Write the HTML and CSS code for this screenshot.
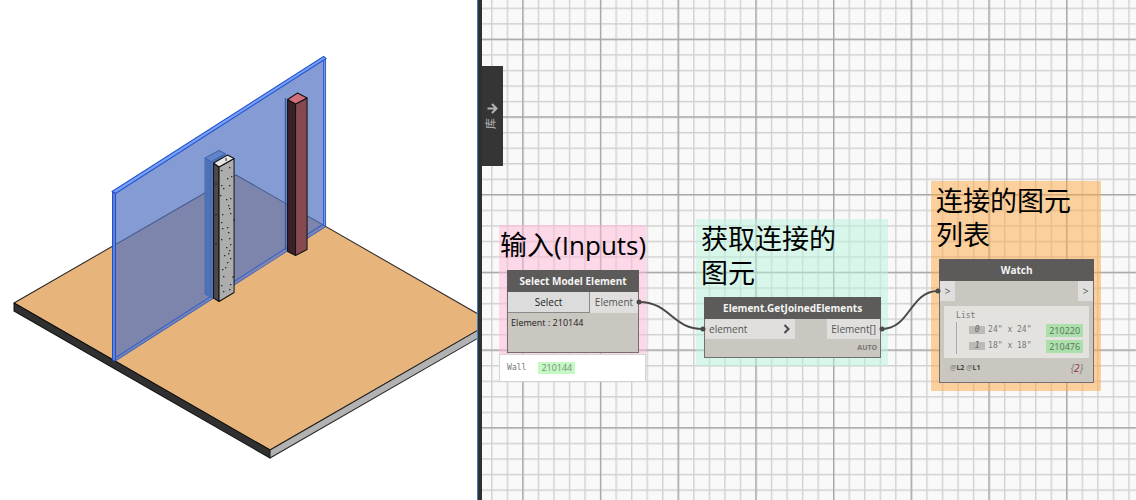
FILE: index.html
```html
<!DOCTYPE html>
<html lang="zh-CN">
<head>
<meta charset="utf-8">
<title>Element.GetJoinedElements</title>
<link rel="stylesheet" href="styles.css">
</head>
<body>
<main class="app">
  <section class="model" aria-label="模型视图">
    <svg class="scene" viewBox="0 0 477 500" preserveAspectRatio="xMidYMid slice" aria-hidden="true">
      <g stroke-linejoin="round">
        <path d="M14 303 236 175 492 322 270 450z" fill="#e7b47b" stroke="#222"/>
        <path d="M14 303 270 450v8L14 311z" fill="#303030" stroke="#111"/>
        <path d="M270 450 492 322v8L270 458z" fill="#b2b2b2" stroke="#222"/>
        <path d="M113 192 325 57V226L114 361z" fill="#5071c2" fill-opacity=".7"/>
        <path d="M112 191.500 323.500 56.500 326 58.500 115.500 193.500z" fill="#78a2fa" stroke="#2452cc"/>
        <path d="M112.500 192 115.500 193.500V360l-1.500 1-1.500-1.500z" fill="#5d84dc" stroke="#2450c2"/>
        <path d="M323.500 60V226M325.500 58.500V226" fill="none" stroke="#2d5bd0"/>
        <path d="M115 358 323.500 224M115 361 325.500 226.500" fill="none" stroke="#3561cb"/>
        <path d="M205 158 219 150.500 225.500 154 213 163V298l-8-4z" fill="#6384c8" stroke="#4168b2"/>
        <path d="M205 158 211 162V297.500L205 294z" fill="#4f72b4"/>
        <path d="m205 158 6 4 14-8M211 162v135" fill="none" stroke="#3e65b0"/>
        <path d="M285.500 98V250" stroke="#345ea9" stroke-width="1.500"/>
        <path d="M213.500 163 219 167V301.500l-5.500-3.500z" fill="#4b4949" stroke="#111"/>
        <path d="M219 167 234 158.500V292.500L219 301.500z" fill="#adadad" stroke="#111"/>
        <path fill="#222" d="M221 170h1.300v1.300h-1.300zM229 167h1.300v1.300h-1.300zM231 176h1.300v1.300h-1.300zM227 178h1.300v1.300h-1.300zM221 185h1.300v1.300h-1.300zM223 188h1.300v1.300h-1.300zM229 185h1.300v1.300h-1.300zM220 195h1.300v1.300h-1.300zM226 199h1.300v1.300h-1.300zM230 198h1.300v1.300h-1.300zM228 205h1.300v1.300h-1.300zM229 208h1.300v1.300h-1.300zM222 214h1.300v1.300h-1.300zM230 213h1.300v1.300h-1.300zM221 222h1.300v1.300h-1.300zM222 228h1.300v1.300h-1.300zM227 227h1.300v1.300h-1.300zM228 232h1.300v1.300h-1.300zM221 239h1.300v1.300h-1.300zM229 238h1.300v1.300h-1.300zM230 244h1.300v1.300h-1.300zM226 247h1.300v1.300h-1.300zM229 250h1.300v1.300h-1.300zM224 255h1.300v1.300h-1.300zM228 253h1.300v1.300h-1.300zM230 258h1.300v1.300h-1.300zM227 262h1.300v1.300h-1.300zM222 269h1.300v1.300h-1.300zM225 267h1.300v1.300h-1.300zM223 276h1.300v1.300h-1.300zM221 285h1.300v1.300h-1.300zM223 291h1.300v1.300h-1.300zM230 284h1.300v1.300h-1.300zM229 289h1.300v1.300h-1.300z"/>
        <path d="M213.500 163 227.500 155l6.500 3.500L219 167z" fill="#e6e6e6" stroke="#111"/>
        <path d="M226 158v3M215 184h2M215 215h2M215 244h2M233 220h2M232 277h2" stroke="#222"/>
        <path d="M287.500 99.500 295.500 104V255.500l-8-4z" fill="#3b2125" stroke="#111"/>
        <path d="M295.500 104 307 98V249.500l-11.500 6z" fill="#854950" stroke="#111"/>
        <path d="M287.500 99.500 297.500 93 307 98l-11.500 6z" fill="#d1707a" stroke="#111"/>
      </g>
    </svg>
  </section>

  <section class="canvas" aria-label="工作空间">
    <svg class="canvas-grid" aria-hidden="true">
      <defs>
        <pattern id="minor" width="15.540" height="15.540" patternUnits="userSpaceOnUse" x="40.200" y="38.700">
          <path d="M.7 0V15.540M0 .7H15.540" stroke="#d1d1d1" stroke-width="1.400"/>
        </pattern>
        <pattern id="major" width="77.700" height="77.700" patternUnits="userSpaceOnUse" x="40.200" y="38.700">
          <path d="M.7 0V77.700M0 .7H77.700" stroke="#a2a2a2" stroke-width="1.200"/>
        </pattern>
      </defs>
      <rect width="100%" height="100%" fill="url(#minor)"/>
      <rect width="100%" height="100%" fill="url(#major)"/>
    </svg>

    <button class="library" type="button">
      <svg width="11" height="11" viewBox="0 0 11 11" aria-hidden="true"><path d="M.5 5.500h8M5 1l4.500 4.500L5 10" fill="none" stroke="#b4b4b4" stroke-width="2"/></svg>
      <span class="library-label">库</span>
    </button>

    <article class="group group-inputs">
      <h2 class="group-title">输入<span class="latin">(Inputs)</span></h2>
      <div class="node">
        <h3 class="node-title">Select Model Element</h3>
        <div class="ports">
          <button class="select" type="button">Select</button>
          <span class="port port-element">Element</span>
        </div>
        <p class="selection">Element : 210144</p>
      </div>
    </article>
    <div class="preview"><span class="mono">Wall</span><span class="id">210144</span></div>

    <article class="group group-joined">
      <h2 class="group-title">获取连接的<br>图元</h2>
      <div class="node">
        <h3 class="node-title">Element.GetJoinedElements</h3>
        <div class="ports">
          <span class="port port-in">element
            <svg width="8" height="10" viewBox="0 0 8 10" aria-hidden="true"><path d="m1.500 1 4 4-4 4" fill="none" stroke="#484848" stroke-width="2"/></svg>
          </span>
          <span class="port">Element[]</span>
        </div>
        <p class="lacing">AUTO</p>
      </div>
    </article>

    <article class="group group-list">
      <h2 class="group-title">连接的图元<br>列表</h2>
      <div class="node">
        <h3 class="node-title">Watch</h3>
        <div class="ports">
          <span class="port port-mark">&gt;</span>
          <span class="port port-mark">&gt;</span>
        </div>
        <div class="watch">
          <div class="watch-body">
            <p class="mono">List</p>
            <ol class="items">
              <li class="item"><span class="index">0</span><span class="mono size">24" x 24"</span><span class="id">210220</span></li>
              <li class="item"><span class="index">1</span><span class="mono size">18" x 18"</span><span class="id">210476</span></li>
            </ol>
          </div>
          <div class="watch-foot">
            <span class="levels">@<b>L2</b> @<b>L1</b></span>
            <span class="count">{<b>2</b>}</span>
          </div>
        </div>
      </div>
    </article>

    <svg class="wires" aria-hidden="true">
      <g fill="none" stroke="#494949" stroke-width="2">
        <path d="M157 302C188 302 190 329 221 329"/>
        <path d="M400 329C428 329 428 291 456 291"/>
      </g>
      <g fill="#494949">
        <circle cx="157" cy="302" r="2.500"/><circle cx="221" cy="329" r="2.500"/>
        <circle cx="400" cy="329" r="2.500"/><circle cx="456" cy="291" r="2.500"/>
      </g>
    </svg>
  </section>
</main>
</body>
</html>
```
FILE: styles.css
```css
* {
  box-sizing: border-box;
}

body,
h2,
h3,
p,
ol {
  margin: 0;
  padding: 0;
}

body {
  font: 10px/14px "Open Sans", "Noto Sans CJK SC", sans-serif;
  color: #222;
  background: #fff;
}

button {
  border: 0;
  padding: 0;
  font: inherit;
  color: inherit;
}

.app {
  display: flex;
  min-height: 100vh;
}

.model {
  flex: 0 0 42%;
  display: flex;
}

.scene {
  width: 100%;
  height: 100vh;
}

.canvas {
  position: relative;
  flex: 1;
  overflow: hidden;
  background: #f9f9f9;
  border-left: 4px solid #303030;
  box-shadow: -1px 0 #3583c4;
  margin-left: 1px;
}

.canvas-grid,
.wires {
  position: absolute;
  inset: 0;
  width: 100%;
  height: 100%;
}

.wires {
  pointer-events: none;
}

.library {
  position: absolute;
  left: 0;
  top: 66px;
  width: 21px;
  height: 100px;
  display: flex;
  flex-direction: column;
  align-items: center;
  justify-content: center;
  gap: 4px;
  background: #353535;
  color: #b4b4b4;
}

.library-label {
  writing-mode: vertical-rl;
  text-orientation: sideways;
  transform: rotate(180deg);
  font-size: 11px;
  line-height: 16px;
  padding-left: 4px;
}

.group {
  position: absolute;
  display: flex;
  flex-direction: column;
  gap: 8px;
  padding: 2px 7px 8px 8px;
}

.group-inputs {
  left: 17px;
  top: 225px;
  width: 147px;
  padding-bottom: 3px;
  background: rgba(255, 183, 215, 0.5);
}

.group-joined {
  left: 214px;
  top: 219px;
  width: 192px;
  background: rgba(183, 245, 219, 0.5);
}

.group-list {
  left: 449px;
  top: 181px;
  width: 170px;
  background: rgba(255, 167, 63, 0.5);
}

.group-title {
  margin: 0 -7px 0 -3px;
  font: 400 27px/34px "Noto Sans CJK SC", sans-serif;
  color: #000;
}

.group-inputs .group-title {
  margin-left: -7px;
  white-space: nowrap;
}

.latin {
  font-family: "Open Sans", sans-serif;
  font-size: 26px;
}

.node {
  background: #cac6c0;
  border: 1px solid #71706e;
}

.node-title {
  margin: -1px -1px 0;
  background: #5c5b59;
  color: #f4f4f4;
  font-size: 10px;
  line-height: 22px;
  font-weight: 700;
  text-align: center;
}

.ports {
  display: flex;
  justify-content: space-between;
  line-height: 20px;
}

.port {
  padding: 0 4px;
  background: #e0dfdd;
  color: #555;
}

.port-element {
  padding: 0 5px;
}

.select {
  flex: 1;
  background: #dcdcdc;
  border-right: 1px solid #8c8a88;
  border-bottom: 1px solid #8c8a88;
}

.selection {
  padding: 3px 3px 22px;
  font-size: 9px;
}

.preview {
  position: absolute;
  left: 17px;
  top: 354px;
  width: 147px;
  height: 28px;
  display: flex;
  align-items: center;
  gap: 12px;
  padding-left: 7px;
  background: #fff;
  border: 1px solid #d4d4d4;
  color: #888;
}

.mono {
  font-family: "DejaVu Sans Mono", monospace;
  font-size: 8px;
  color: #777;
}

.id {
  padding: 0 3px;
  background: #abe0ab;
  color: #5d715d;
  font-size: 9px;
  line-height: 12px;
}

.preview .id {
  background: #c4f9c4;
  color: #7c8f7c;
}

.port-in {
  display: flex;
  align-items: center;
  justify-content: space-between;
  width: 90px;
}

.lacing {
  padding: 2px 3px;
  color: #777;
  font-size: 7px;
  font-weight: 700;
  text-align: right;
}

.port-mark {
  width: 15px;
  text-align: center;
}

.watch {
  margin: 5px 4px 4px;
}

.watch-body {
  padding: 4px 6px 4px 12px;
  background: #e4e2df;
}

.watch-body p {
  line-height: 12px;
}

.items {
  list-style: none;
  border-left: 1px solid #aaa;
}

.item {
  display: flex;
  align-items: center;
  padding-left: 12px;
  line-height: 16px;
}

.item .id {
  line-height: 13px;
}

.index {
  width: 16px;
  margin-right: 3px;
  background: #bcbab7;
  color: #666;
  font: italic 8px/8px "DejaVu Sans Mono", monospace;
  text-align: center;
}

.size {
  flex: 1;
  white-space: nowrap;
}

.watch-foot {
  display: flex;
  justify-content: space-between;
  padding: 0 6px;
  line-height: 20px;
  color: #777;
}

.levels {
  font-size: 7px;
}

.levels b {
  color: #444;
}

.count {
  font-style: italic;
}

.count b {
  color: #982a2a;
  font-weight: 400;
}
```
